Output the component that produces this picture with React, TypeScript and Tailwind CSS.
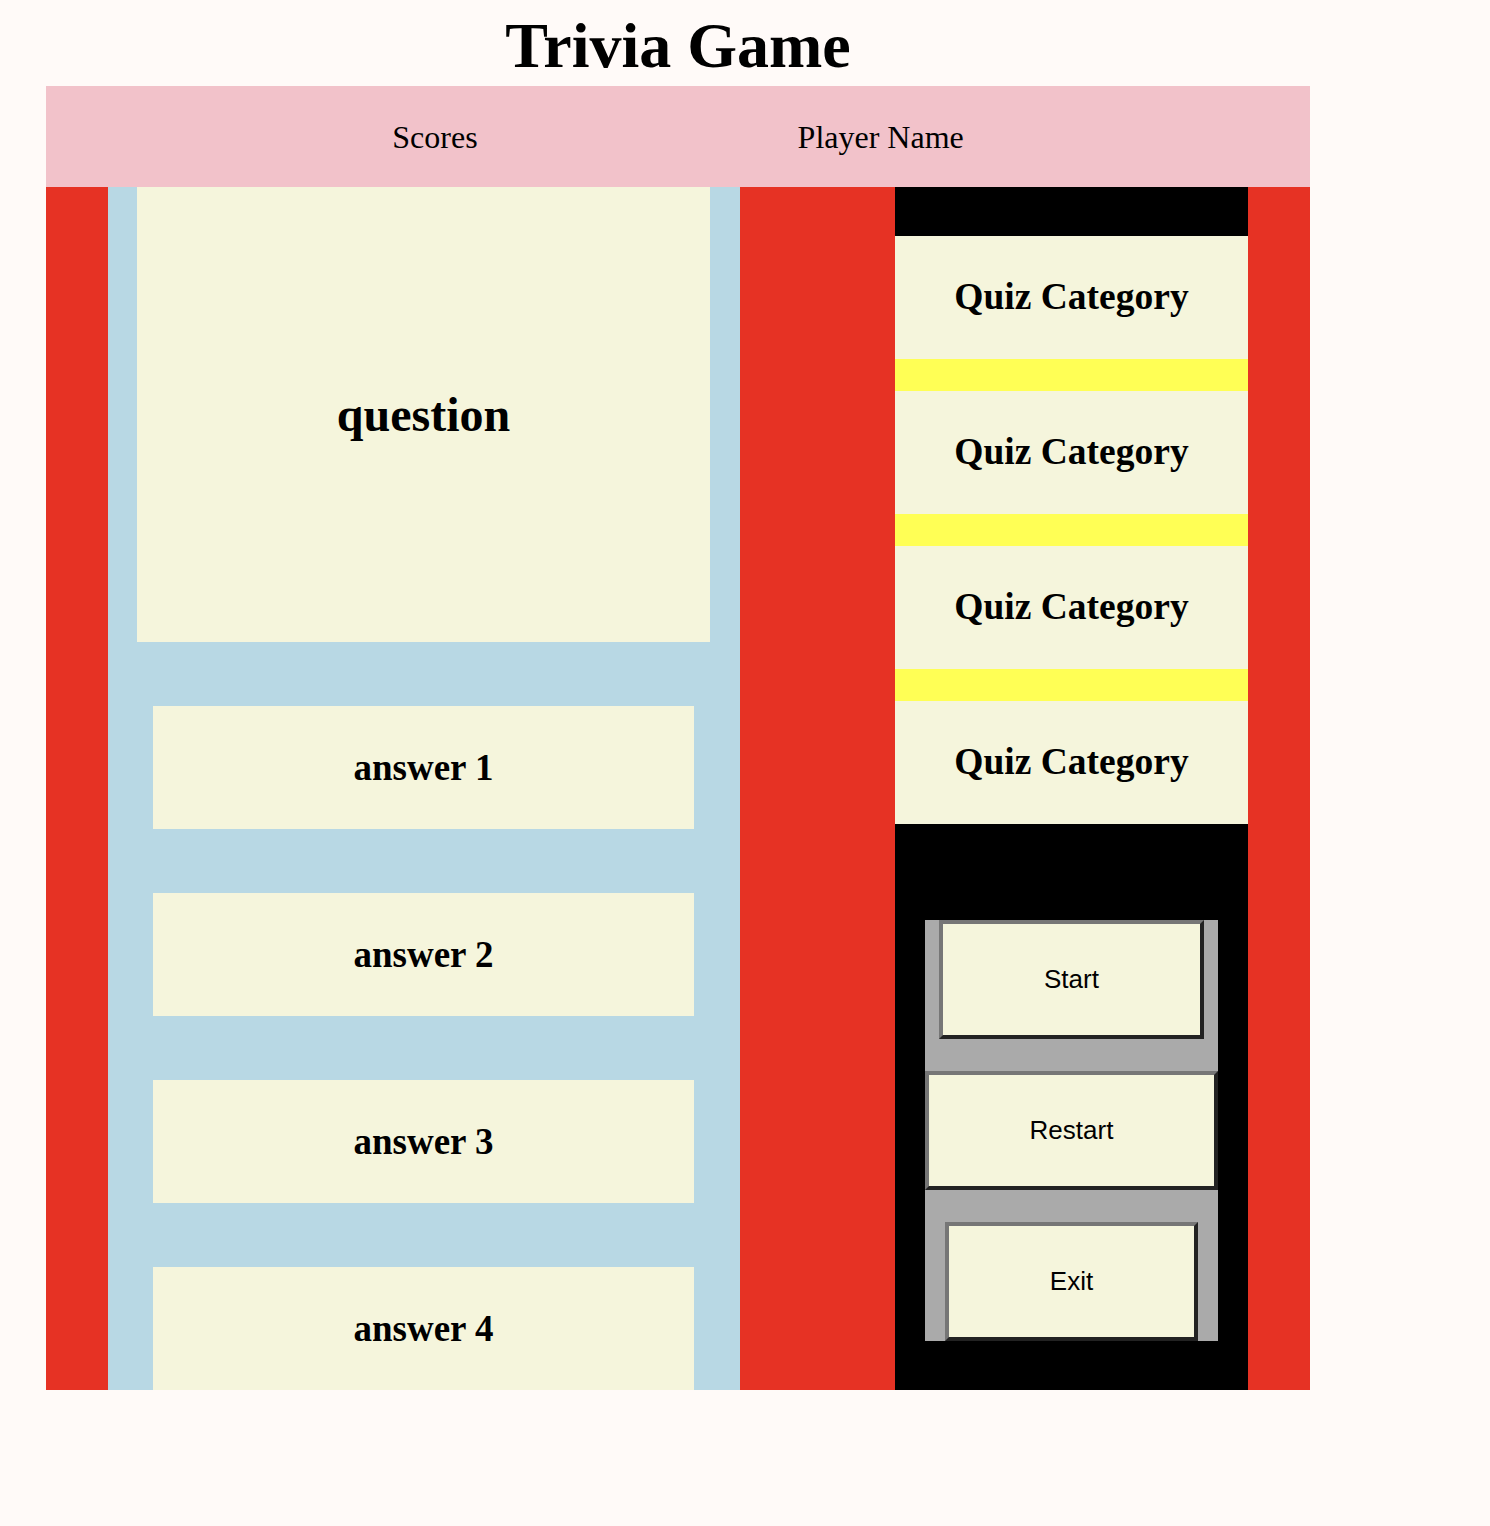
const serif = "font-['Liberation_Serif','Times_New_Roman',serif]";
const sans = "font-['Liberation_Sans',Arial,sans-serif]";

const answers = ["answer 1", "answer 2", "answer 3", "answer 4"];
const categories = ["Quiz Category", "Quiz Category", "Quiz Category", "Quiz Category"];

function GameButton({ label, className }: { label: string; className: string }) {
  return (
    <button
      type="button"
      className={`flex h-[119px] shrink-0 items-center justify-center border-4 border-t-[#767676] border-l-[#767676] border-b-[#222222] border-r-[#222222] bg-[#f5f5dc] text-[26px] text-black ${sans} ${className}`}
    >
      {label}
    </button>
  );
}

export default function App() {
  return (
    <div className={`min-h-[1526px] bg-[#fffaf8] text-black ${serif}`}>
      <div className="ml-[46px] w-[1264px]">
        <h1 className="flex h-[86px] items-center justify-center pt-[6px] text-[64px] leading-none font-bold">
          Trivia Game
        </h1>

        <header className="flex h-[101px] items-center justify-center gap-[320px] bg-[#f2c2ca] text-[32px]">
          <span>Scores</span>
          <span>Player Name</span>
        </header>

        <main className="flex h-[1203px] bg-[#e63224]">
          <div className="w-[62px] shrink-0" />

          <section className="flex w-[632px] shrink-0 flex-col bg-[#b8d8e4]">
            <div className="ml-[29px] mr-[30px] flex h-[455px] shrink-0 items-center justify-center bg-[#f5f5dc] text-[48px] font-bold">
              question
            </div>
            {answers.map((answer) => (
              <div
                key={answer}
                className="ml-[45px] mr-[46px] mt-[64px] flex h-[123px] shrink-0 items-center justify-center bg-[#f5f5dc] text-[37px] font-bold"
              >
                {answer}
              </div>
            ))}
          </section>

          <div className="w-[155px] shrink-0" />

          <aside className="flex w-[353px] shrink-0 flex-col bg-black pt-[49px]">
            {categories.map((category, i) => (
              <div key={i} className="flex flex-col">
                {i > 0 && <div className="h-[32px] bg-[#ffff55]" />}
                <div className="flex h-[123px] items-center justify-center bg-[#f5f5dc] text-[37.5px] font-bold">
                  {category}
                </div>
              </div>
            ))}

            <div className="mx-[30px] mt-[96px] flex h-[421px] flex-col items-center gap-[32px] bg-[#aaaaaa]">
              <GameButton label="Start" className="w-[265px]" />
              <GameButton label="Restart" className="w-full" />
              <GameButton label="Exit" className="w-[253px]" />
            </div>
          </aside>

          <div className="w-[62px] shrink-0" />
        </main>
      </div>
    </div>
  );
}
